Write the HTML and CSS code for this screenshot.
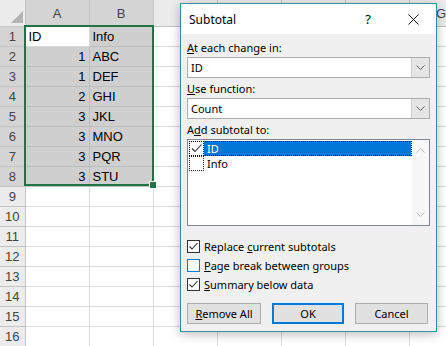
FILE: index.html
```html
<!DOCTYPE html>
<html lang="en">
<head>
    <meta charset="UTF-8">
    <title>Subtotal</title>
    <link rel="stylesheet" href="styles.css">
</head>
<body>
<div class="app">
    <table class="sheet">
        <colgroup>
            <col class="rh"><col class="c"><col class="c"><col class="c"><col class="c"><col class="c"><col class="c"><col class="c">
        </colgroup>
        <tr class="head">
            <th class="corner"><svg width="25" height="26" viewBox="0 0 25 26"><polygon points="11,23 23,11 23,23" fill="#b4b4b4"/></svg></th>
            <th class="hl">A</th><th class="hl">B</th><th>C</th><th>D</th><th>E</th><th>F</th><th>G</th>
        </tr>
        <tr><th class="hl">1</th><td class="active">ID</td><td class="sel">Info</td><td></td><td></td><td></td><td></td><td></td></tr>
        <tr><th class="hl">2</th><td class="sel num">1</td><td class="sel">ABC</td><td></td><td></td><td></td><td></td><td></td></tr>
        <tr><th class="hl">3</th><td class="sel num">1</td><td class="sel">DEF</td><td></td><td></td><td></td><td></td><td></td></tr>
        <tr><th class="hl">4</th><td class="sel num">2</td><td class="sel">GHI</td><td></td><td></td><td></td><td></td><td></td></tr>
        <tr><th class="hl">5</th><td class="sel num">3</td><td class="sel">JKL</td><td></td><td></td><td></td><td></td><td></td></tr>
        <tr><th class="hl">6</th><td class="sel num">3</td><td class="sel">MNO</td><td></td><td></td><td></td><td></td><td></td></tr>
        <tr><th class="hl">7</th><td class="sel num">3</td><td class="sel">PQR</td><td></td><td></td><td></td><td></td><td></td></tr>
        <tr><th class="hl">8</th><td class="sel num">3</td><td class="sel">STU</td><td></td><td></td><td></td><td></td><td></td></tr>
        <tr><th>9</th><td></td><td></td><td></td><td></td><td></td><td></td><td></td></tr>
        <tr><th>10</th><td></td><td></td><td></td><td></td><td></td><td></td><td></td></tr>
        <tr><th>11</th><td></td><td></td><td></td><td></td><td></td><td></td><td></td></tr>
        <tr><th>12</th><td></td><td></td><td></td><td></td><td></td><td></td><td></td></tr>
        <tr><th>13</th><td></td><td></td><td></td><td></td><td></td><td></td><td></td></tr>
        <tr><th>14</th><td></td><td></td><td></td><td></td><td></td><td></td><td></td></tr>
        <tr><th>15</th><td></td><td></td><td></td><td></td><td></td><td></td><td></td></tr>
        <tr><th>16</th><td></td><td></td><td></td><td></td><td></td><td></td><td></td></tr>
    </table>

    <div class="selection"><span class="handle"></span></div>

    <div class="dialog">
        <div class="titlebar">
            <span class="title">Subtotal</span>
            <span class="help">?</span>
            <span class="close">
                <svg width="11" height="11" viewBox="0 0 11 11"><path d="M0.5 0.5 L10.5 10.5 M10.5 0.5 L0.5 10.5" stroke="#111" stroke-width="1" fill="none"/></svg>
            </span>
        </div>
        <div class="body">
            <div class="label first"><u>A</u>t each change in:</div>
            <div class="combo">
                <span class="value">ID</span>
                <span class="drop"><svg width="9" height="5" viewBox="0 0 9 5"><path d="M0.5 0.5 L4.5 4.5 L8.5 0.5" stroke="#606060" fill="none"/></svg></span>
            </div>

            <div class="label"><u>U</u>se function:</div>
            <div class="combo">
                <span class="value">Count</span>
                <span class="drop"><svg width="9" height="5" viewBox="0 0 9 5"><path d="M0.5 0.5 L4.5 4.5 L8.5 0.5" stroke="#606060" fill="none"/></svg></span>
            </div>

            <div class="label">A<u>d</u>d subtotal to:</div>
            <div class="listbox">
                <div class="items">
                    <div class="item focus">
                        <span class="lcheck"><svg width="13" height="13" viewBox="0 0 13 13"><path d="M2 6.5 L5 9.5 L11.5 2.5" stroke="#333" stroke-width="1.1" fill="none"/></svg></span>
                        <span class="ltext picked">ID</span>
                    </div>
                    <div class="item">
                        <span class="lcheck"></span>
                        <span class="ltext">Info</span>
                    </div>
                </div>
                <div class="scroll">
                    <svg width="9" height="5" viewBox="0 0 9 5"><path d="M0.5 4.5 L4.5 0.5 L8.5 4.5" stroke="#c8c8c8" fill="none"/></svg>
                    <svg width="9" height="5" viewBox="0 0 9 5"><path d="M0.5 0.5 L4.5 4.5 L8.5 0.5" stroke="#c8c8c8" fill="none"/></svg>
                </div>
            </div>

            <div class="options">
                <div class="option">
                    <span class="check on"><svg width="11" height="11" viewBox="0 0 11 11"><path d="M1.5 5.5 L4 8 L9.5 2" stroke="#333" stroke-width="1.1" fill="none"/></svg></span>
                    <span>Replace <u>c</u>urrent subtotals</span>
                </div>
                <div class="option">
                    <span class="check blue"></span>
                    <span><u>P</u>age break between groups</span>
                </div>
                <div class="option">
                    <span class="check on"><svg width="11" height="11" viewBox="0 0 11 11"><path d="M1.5 5.5 L4 8 L9.5 2" stroke="#333" stroke-width="1.1" fill="none"/></svg></span>
                    <span><u>S</u>ummary below data</span>
                </div>
            </div>

            <div class="buttons">
                <span class="btn remove"><u>R</u>emove All</span>
                <span class="btn ok">OK</span>
                <span class="btn cancel">Cancel</span>
            </div>
        </div>
    </div>
</div>
</body>
</html>
```

FILE: styles.css
```css
:root {
    --grid: #dadada;
    --head-bg: #ececec;
    --head-hl: #d4d4d4;
    --head-line: #c4c4c4;
    --sel-bg: #cfcfcf;
    --excel-green: #217346;
    --win-accent: #0078d7;
    --dlg-border: #3a8e9e;
    --dlg-bg: #f0f0f0;
}

body {
    margin: 0;
    background: #fff;
    overflow: hidden;
}

.app {
    position: relative;
    width: 446px;
    height: 346px;
    overflow: hidden;
}

/* spreadsheet */
.sheet {
    border-collapse: collapse;
    table-layout: fixed;
    width: 473px;
    font-family: "Liberation Sans", Arial, sans-serif;
    font-size: 13px;
    color: #000;
}

.sheet col.rh { width: 25px; }
.sheet col.c { width: 64px; }

.sheet tr { height: 20px; }
.sheet tr.head { height: 26px; }

.sheet td {
    border: 1px solid var(--grid);
    padding: 0 3px;
    white-space: nowrap;
    overflow: hidden;
}

.sheet th {
    background: var(--head-bg);
    border: 1px solid var(--head-line);
    font-weight: normal;
    color: #444;
    padding: 0;
    text-align: center;
}

.sheet tr.head th { border-top: none; }
.sheet th:first-child { border-left: none; }

.sheet th.hl { background: var(--head-hl); }

.sheet th.corner {
    background: var(--head-bg);
    vertical-align: bottom;
    line-height: 0;
}

.sheet td.sel { background: var(--sel-bg); border-color: #bdbdbd; }
.sheet td.active { background: #fff; }
.sheet td.num { text-align: right; }

.selection {
    position: absolute;
    left: 24px;
    top: 25px;
    width: 130px;
    height: 161px;
    box-sizing: border-box;
    border: 2px solid var(--excel-green);
}

.handle {
    position: absolute;
    right: -5px;
    bottom: -5px;
    width: 6px;
    height: 6px;
    background: var(--excel-green);
    border: 1px solid #fff;
}

/* dialog */
.dialog {
    position: absolute;
    left: 180px;
    top: 3px;
    width: 257px;
    height: 329px;
    box-sizing: border-box;
    border: 1px solid var(--dlg-border);
    background: var(--dlg-bg);
    box-shadow: 0 2px 10px rgba(0, 0, 0, 0.28);
    font-family: "Noto Sans", "Open Sans", sans-serif;
    font-size: 11px;
    color: #000;
}

.titlebar {
    height: 30px;
    background: #fff;
    display: flex;
    align-items: center;
    padding-left: 8px;
}

.title {
    flex: 1;
    font-size: 12px;
}

.help {
    width: 28px;
    margin-right: 8px;
    text-align: center;
    font-size: 13px;
}

.close {
    width: 46px;
    height: 30px;
    display: flex;
    align-items: center;
    justify-content: center;
}

.body {
    padding: 0 6px;
}

.label {
    height: 16px;
    line-height: 16px;
    margin-top: 3px;
}
.label.first { margin-top: 6px; }

.combo {
    margin-top: 1px;
    height: 21px;
    box-sizing: border-box;
    border: 1px solid #adadad;
    background: #fff;
    display: flex;
}

.combo .value {
    flex: 1;
    padding-left: 3px;
    line-height: 19px;
}

.combo .drop {
    width: 17px;
    background: #e5e5e5;
    border-left: 1px solid #cfcfcf;
    display: flex;
    align-items: center;
    justify-content: center;
}

.listbox {
    margin-top: 1px;
    height: 87px;
    box-sizing: border-box;
    border: 1px solid #828790;
    background: #fff;
    display: flex;
}

.items {
    flex: 1;
    padding-top: 1px;
}

.item {
    display: flex;
    height: 15px;
    margin-left: 1px;
}

.item.focus {
    outline: 1px dotted #000;
    outline-offset: -1px;
}

.lcheck {
    width: 15px;
    height: 15px;
    box-sizing: border-box;
    border: 1px dotted #222;
    display: flex;
    align-items: center;
    justify-content: center;
}

.ltext {
    flex: 1;
    line-height: 15px;
    padding-left: 3px;
}

.ltext.picked {
    background: var(--win-accent);
    color: #fff;
    margin-right: 1px;
}

.scroll {
    width: 17px;
    background: #f7f7f7;
    display: flex;
    flex-direction: column;
    align-items: center;
    justify-content: space-between;
    padding: 8px 0;
    box-sizing: border-box;
}

.options {
    margin-top: 11px;
}

.option {
    height: 19px;
    display: flex;
    align-items: center;
    gap: 4px;
}

.check {
    width: 13px;
    height: 13px;
    box-sizing: border-box;
    border: 1px solid #333;
    background: #fff;
    display: flex;
    align-items: center;
    justify-content: center;
}

.check.blue { border-color: #0078d7; }

.buttons {
    margin-top: 9px;
    display: flex;
}

.btn {
    height: 21px;
    box-sizing: border-box;
    border: 1px solid #adadad;
    background: #e1e1e1;
    text-align: center;
    line-height: 19px;
}

.btn.remove { width: 74px; }
.btn.ok {
    width: 72px;
    margin-left: 11px;
    border: 2px solid var(--win-accent);
    line-height: 17px;
}
.btn.cancel { width: 73px; margin-left: 11px; }
```
